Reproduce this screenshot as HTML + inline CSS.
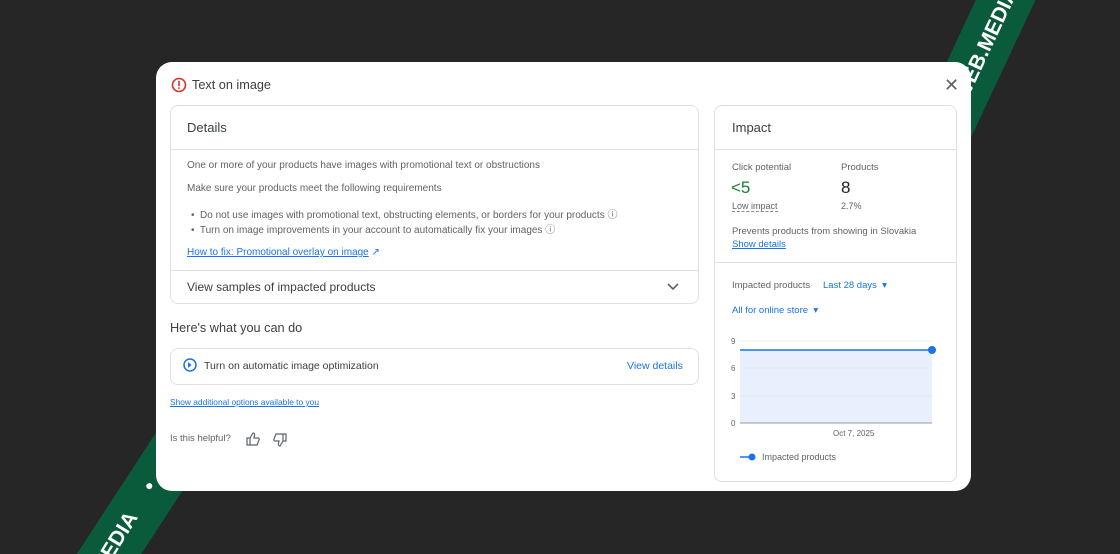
<!DOCTYPE html>
<html><head><meta charset="utf-8"><style>
*{box-sizing:border-box;margin:0;padding:0}
html,body{width:1120px;height:554px;overflow:hidden}
body{background:#262626;font-family:"Liberation Sans",sans-serif;position:relative;color:#3c4043}
.abs{position:absolute}
.card{left:156px;top:62px;width:815px;height:429px;background:#fff;border-radius:16px}
.box{border:1px solid #e0e0e0;border-radius:8px;background:#fff}
.t{font-size:10px;color:#5f6368}
a{color:#1a73e8}
</style></head><body>
<svg class="abs" style="left:0;top:0" width="1120" height="554">
<path d="M1030,-52 L940,140 L236,359 L70,614" stroke="#0a5a3c" stroke-width="54" fill="none" stroke-linejoin="round"/>
<path id="r1" d="M947,143 L1037,-49" fill="none"/>
<path id="r2" d="M76,618 L236,359" fill="none"/>
<text font-family="Liberation Sans" font-weight="bold" font-size="21" fill="#fff"><textPath href="#r1" startOffset="45">WEB.MEDIA</textPath></text>
<text font-family="Liberation Sans" font-weight="bold" font-size="21" fill="#fff" xml:space="preserve"><textPath href="#r2" startOffset="-4">WEB.MEDIA     •</textPath></text>
</svg>
<div class="abs card"></div>
<svg class="abs" style="left:171px;top:77px" width="16" height="16"><circle cx="8" cy="8" r="6.5" stroke="#d93025" stroke-width="1.6" fill="none"/><rect x="7.2" y="4" width="1.6" height="5" fill="#d93025"/><rect x="7.2" y="10.3" width="1.6" height="1.6" fill="#d93025"/></svg>
<div class="abs" style="left:192px;top:78px;font-size:12.7px;color:#3c4043">Text on image</div>
<div class="abs" style="left:944px;top:75px;font-size:18px;color:#5f6368">✕</div>

<div class="abs box" style="left:170px;top:105px;width:529px;height:199px"></div>
<div class="abs" style="left:170px;top:149px;width:529px;height:1px;background:#e0e0e0"></div>
<div class="abs" style="left:170px;top:270px;width:529px;height:1px;background:#e0e0e0"></div>
<div class="abs" style="left:187px;top:120px;font-size:13px">Details</div>
<div class="abs t" style="left:187px;top:160px">One or more of your products have images with promotional text or obstructions</div>
<div class="abs t" style="left:187px;top:183px">Make sure your products meet the following requirements</div>
<div class="abs t" style="left:191px;top:206px">•&nbsp; Do not use images with promotional text, obstructing elements, or borders for your products ⓘ</div>
<div class="abs t" style="left:191px;top:221px">•&nbsp; Turn on image improvements in your account to automatically fix your images ⓘ</div>
<div class="abs" style="left:187px;top:247px;font-size:10px"><a style="text-decoration:underline">How to fix: Promotional overlay on image</a> <span style="color:#1a73e8">↗</span></div>
<div class="abs" style="left:187px;top:280px;font-size:12px;color:#3c4043">View samples of impacted products</div>
<svg class="abs" style="left:666px;top:282px" width="14" height="10"><path d="M2 2l5 5 5-5" stroke="#5f6368" stroke-width="1.6" fill="none"/></svg>

<div class="abs" style="left:170px;top:321px;font-size:12.7px">Here's what you can do</div>
<div class="abs box" style="left:170px;top:348px;width:529px;height:37px"></div>
<svg class="abs" style="left:183px;top:358px" width="14" height="14"><circle cx="7" cy="7" r="6" stroke="#1a73e8" stroke-width="1.5" fill="none"/><path d="M5 4l3.5 3L5 10z" fill="#1a73e8"/></svg>
<div class="abs" style="left:204px;top:360px;font-size:10.5px">Turn on automatic image optimization</div>
<div class="abs" style="left:627px;top:360px;font-size:10.5px;color:#1a73e8">View details</div>
<div class="abs" style="left:170px;top:397px;font-size:8.4px"><a style="text-decoration:underline">Show additional options available to you</a></div>
<div class="abs t" style="left:170px;top:433px;font-size:9.5px">Is this helpful?</div>
<svg class="abs" style="left:246px;top:432px" width="14" height="14"><path d="M1 6h3v7H1zM4 6l3-5c1 0 2 1 1.5 2.5L8 6h4c1 0 1.5 1 1 2l-2 5H4" stroke="#5f6368" stroke-width="1.2" fill="none"/></svg>
<svg class="abs" style="left:273px;top:433px" width="14" height="14"><g transform="rotate(180 7 7)"><path d="M1 6h3v7H1zM4 6l3-5c1 0 2 1 1.5 2.5L8 6h4c1 0 1.5 1 1 2l-2 5H4" stroke="#5f6368" stroke-width="1.2" fill="none"/></g></svg>

<div class="abs box" style="left:714px;top:105px;width:243px;height:377px"></div>
<div class="abs" style="left:714px;top:149px;width:243px;height:1px;background:#e0e0e0"></div>
<div class="abs" style="left:714px;top:262px;width:243px;height:1px;background:#e0e0e0"></div>
<div class="abs" style="left:732px;top:120px;font-size:13px">Impact</div>
<div class="abs t" style="left:732px;top:162px;font-size:9.5px">Click potential</div>
<div class="abs t" style="left:841px;top:162px;font-size:9.5px">Products</div>
<div class="abs" style="left:731px;top:178px;font-size:17px;color:#188038">&lt;5</div>
<div class="abs" style="left:841px;top:178px;font-size:17px;color:#202124">8</div>
<div class="abs t" style="left:732px;top:201px;font-size:9px;border-bottom:1px dashed #888">Low impact</div>
<div class="abs t" style="left:841px;top:201px;font-size:9px">2.7%</div>
<div class="abs t" style="left:732px;top:226px;font-size:9.5px">Prevents products from showing in Slovakia</div>
<div class="abs" style="left:732px;top:239px;font-size:9.5px"><a style="text-decoration:underline">Show details</a></div>
<div class="abs t" style="left:732px;top:280px;font-size:9.5px">Impacted products</div>
<div class="abs" style="left:823px;top:280px;font-size:9.5px;color:#1a73e8">Last 28 days &nbsp;▾</div>
<div class="abs" style="left:732px;top:305px;font-size:9.5px;color:#1a73e8">All for online store &nbsp;▾</div>
<svg class="abs" style="left:720px;top:330px" width="230" height="140" font-family="Liberation Sans" font-size="8" fill="#5f6368">
<rect x="20" y="20" width="192" height="73" fill="#e8f0fe"/>
<line x1="20" y1="11" x2="212" y2="11" stroke="#eee"/>
<line x1="20" y1="38" x2="212" y2="38" stroke="#e4e8ef"/>
<line x1="20" y1="66" x2="212" y2="66" stroke="#e4e8ef"/>
<line x1="20" y1="93" x2="212" y2="93" stroke="#999"/>
<line x1="20" y1="20" x2="212" y2="20" stroke="#1a73e8" stroke-width="1.5"/>
<circle cx="212" cy="20" r="4" fill="#1a73e8"/>
<text x="11" y="14">9</text><text x="11" y="41">6</text><text x="11" y="69">3</text><text x="11" y="96">0</text>
<text x="113" y="106">Oct 7, 2025</text>
<line x1="20" y1="127" x2="33" y2="127" stroke="#1a73e8" stroke-width="1.5"/><circle cx="32" cy="127" r="3.5" fill="#1a73e8"/>
<text x="42" y="130" font-size="9">Impacted products</text>
</svg>
</body></html>
